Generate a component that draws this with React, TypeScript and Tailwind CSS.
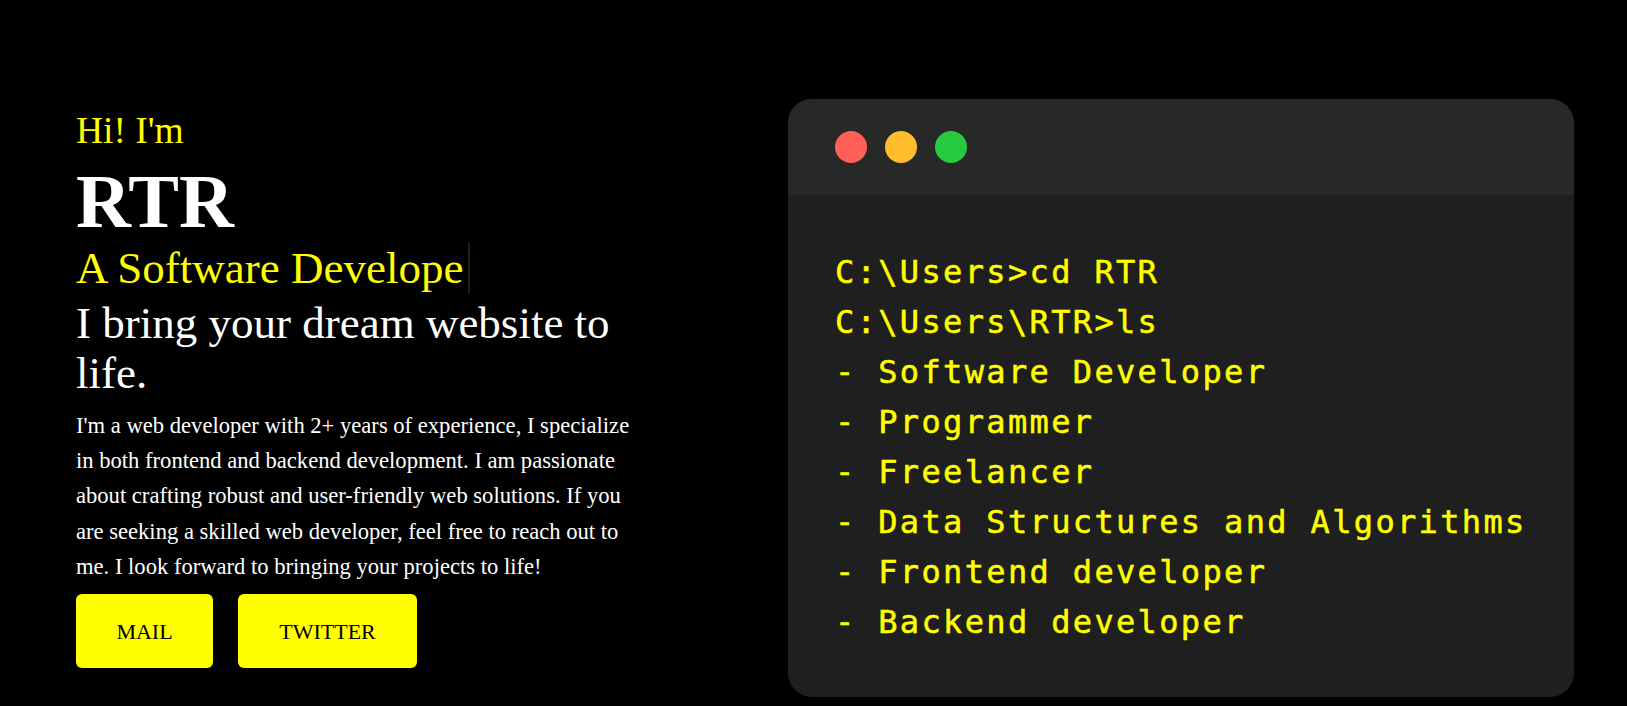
import React from "react";

const serif = { fontFamily: '"Liberation Serif", "Times New Roman", serif' };

export default function App() {
  const lines = [
    "C:\\Users>cd RTR",
    "C:\\Users\\RTR>ls",
    "- Software Developer",
    "- Programmer",
    "- Freelancer",
    "- Data Structures and Algorithms",
    "- Frontend developer",
    "- Backend developer",
  ];
  return (
    <div className="flex h-[706px] w-full overflow-hidden bg-black" style={serif}>
      <div className="ml-[76px] w-[566px] shrink-0 pt-[109px]">
        <div className="text-[37.5px] leading-[43px] text-[#ffff00]">Hi! I'm</div>
        <div className="mt-[12px] text-[76px] font-bold leading-[75px] text-white">RTR</div>
        <div className="mt-[4px] text-[45px] leading-[50px] text-[#ffff00]">
          <span className="border-r-2 border-[#23230c] pr-[5px]">A Software Develope</span>
        </div>
        <div className="mt-[5px] text-[45px] leading-[50px] text-white">
          I bring your dream website to life.
        </div>
        <p className="mt-[10px] text-[22.6px] leading-[35.2px] text-white">
          I'm a web developer with 2+ years of experience, I specialize in both frontend and
          backend development. I am passionate about crafting robust and user-friendly web
          solutions. If you are seeking a skilled web developer, feel free to reach out to me. I
          look forward to bringing your projects to life!
        </p>
        <div className="mt-[10px] flex gap-[25px]">
          <button className="flex h-[74px] w-[137px] items-center justify-center rounded-md bg-[#ffff00] text-[22px] text-black">
            MAIL
          </button>
          <button className="flex h-[74px] w-[179px] items-center justify-center rounded-md bg-[#ffff00] text-[22px] text-black">
            TWITTER
          </button>
        </div>
      </div>
      <div className="mr-[53px] ml-auto mt-[99px] h-[598px] w-[786px] shrink-0 overflow-hidden rounded-3xl bg-[#1f1f1f]">
        <div className="flex h-[96px] items-center gap-[18px] bg-[#282828] pl-[47px]">
          <span className="h-8 w-8 rounded-full bg-[#ff5f56]" />
          <span className="h-8 w-8 rounded-full bg-[#ffbd2e]" />
          <span className="h-8 w-8 rounded-full bg-[#27c93f]" />
        </div>
        <div
          className="pl-[47px] pt-[52px] text-[32px] leading-[50px] tracking-[2.35px] text-[#ffff00] [-webkit-text-stroke:0.5px_#ffff00]"
          style={{ fontFamily: '"DejaVu Sans Mono", "Liberation Mono", monospace' }}
        >
          {lines.map((l) => (
            <div key={l} className="whitespace-pre">
              {l}
            </div>
          ))}
        </div>
      </div>
    </div>
  );
}
